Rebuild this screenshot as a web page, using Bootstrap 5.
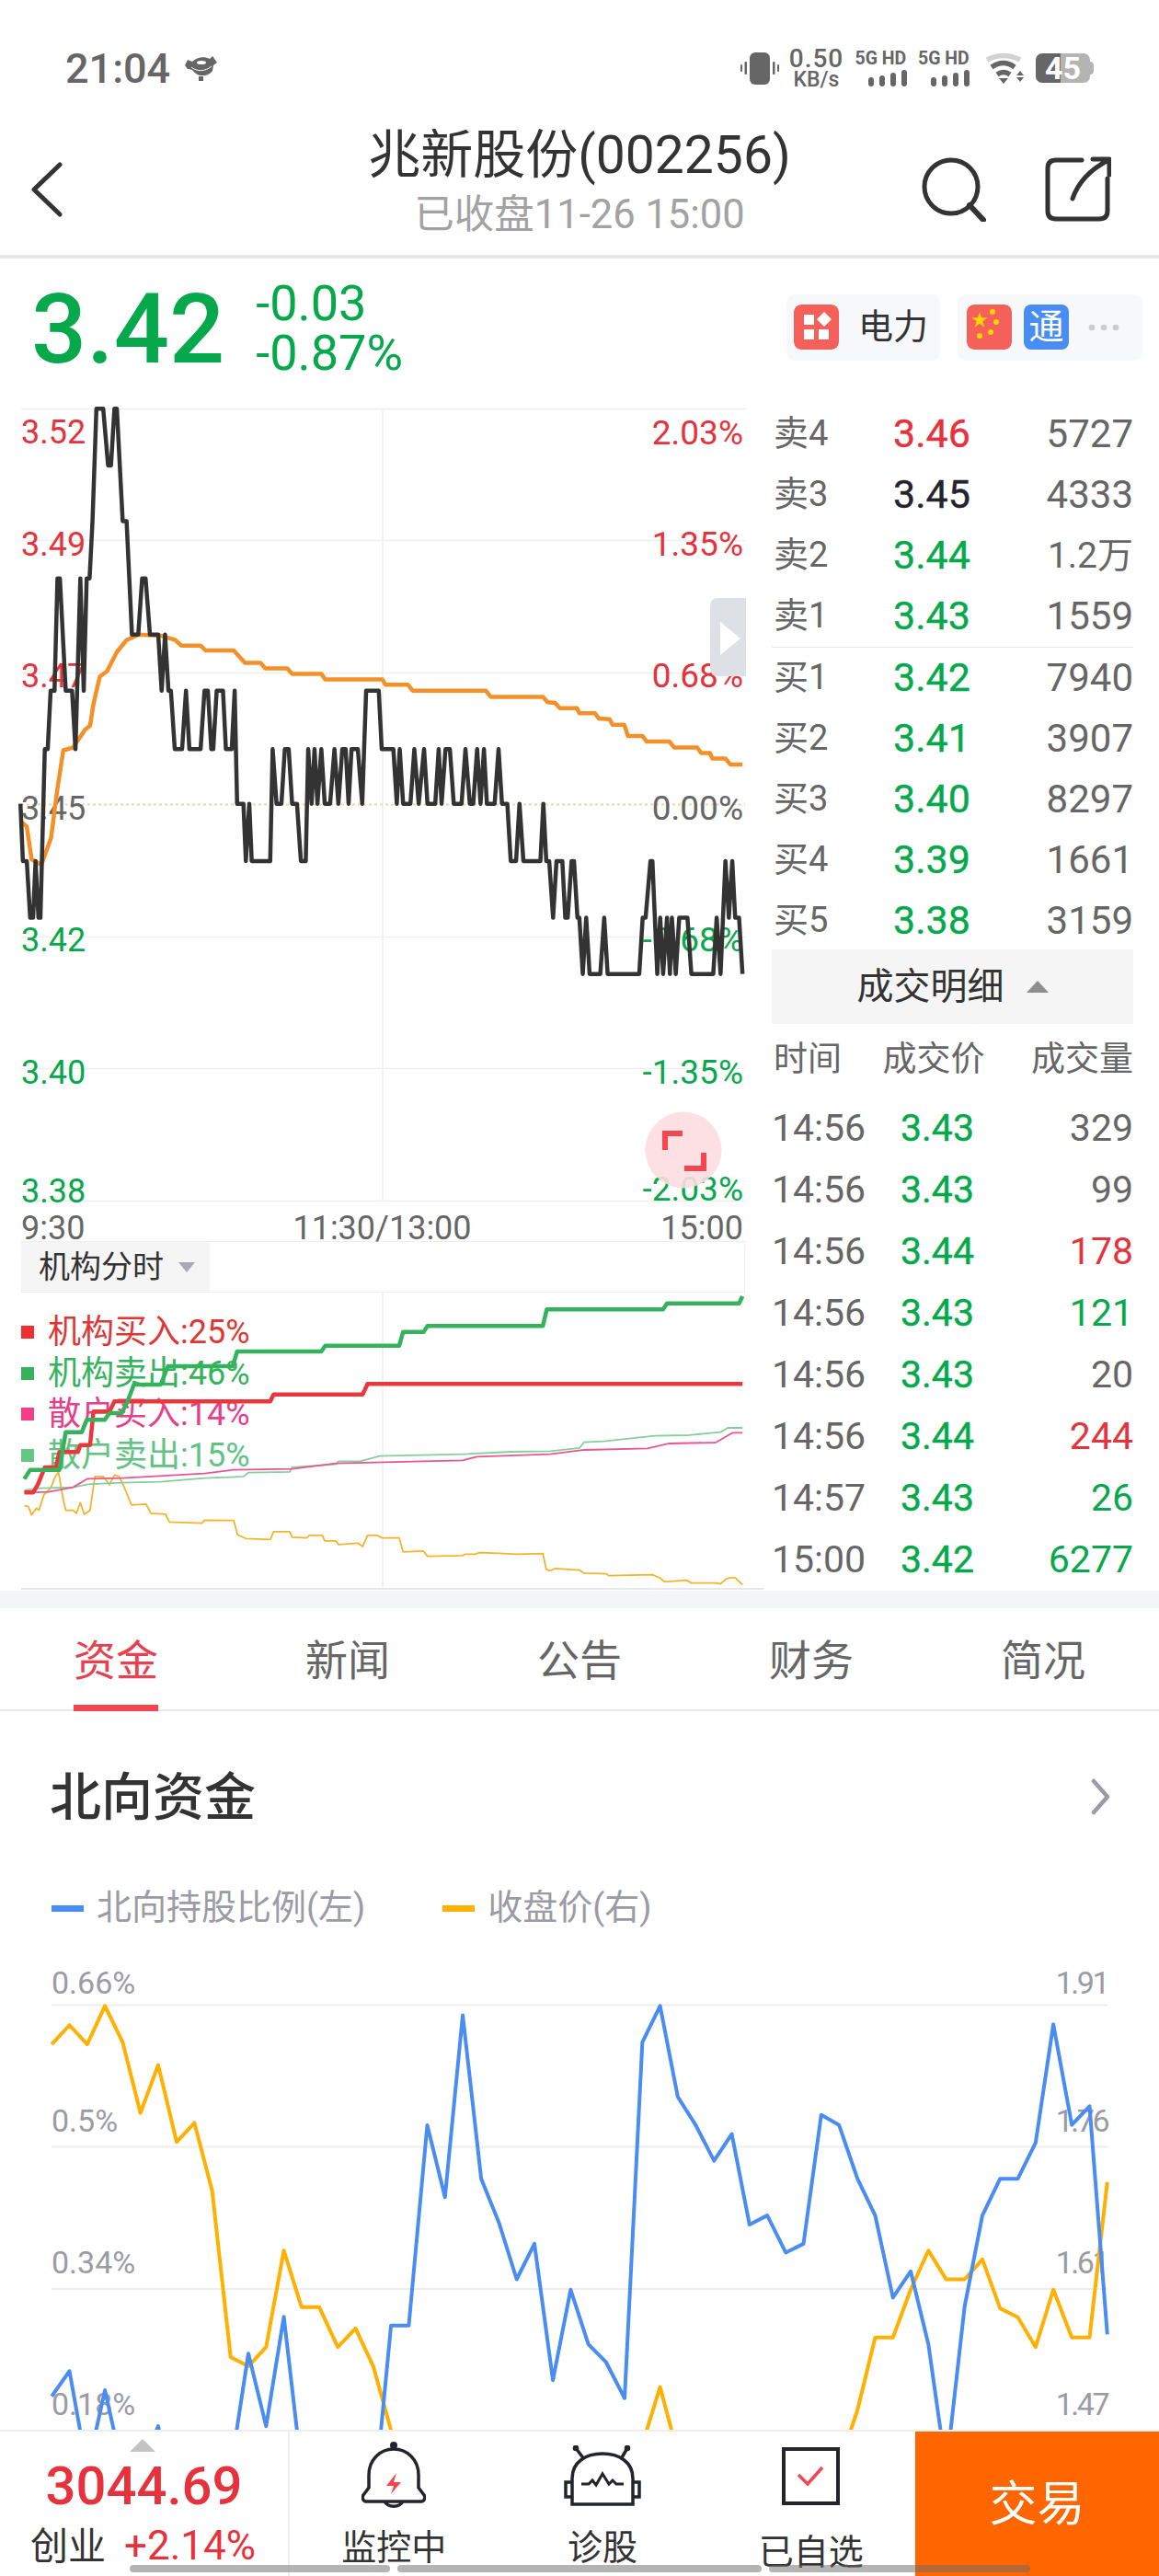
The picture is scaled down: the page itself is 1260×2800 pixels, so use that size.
<!DOCTYPE html>
<html lang="zh">
<head>
<meta charset="utf-8">
<title>兆新股份</title>
<link href="https://cdn.jsdelivr.net/npm/bootstrap@5.3.0/dist/css/bootstrap.min.css" rel="stylesheet">
<style>
html,body{margin:0;height:2800px;overflow:hidden;background:#fff}
body{font-family:Roboto,"Noto Sans CJK SC",sans-serif;color:#333;width:1260px;line-height:1.2}
.c-red{color:#e5323c}.c-green{color:#06a84c}.c-gray{color:#666}.c-dark{color:#23242c}
.st-bar{height:135px;padding:13px 75px 0 71px;color:#666}
.st-time{font-size:45px;font-weight:500;line-height:1}
.st-speed{font-weight:500;line-height:1;width:56px;margin-left:12.500px}
.st-speed b{font-size:28px;font-weight:500;letter-spacing:1px}
.st-speed i{font-style:normal;font-size:23px;margin-top:-3px}
.st-sig{font-size:19.500px;font-weight:700;line-height:1;margin-left:14px;width:56px;white-space:nowrap}
.st-sig2{margin-left:12.500px}
.st-sig svg{margin-top:3px;align-self:flex-end}
.st-batt{width:59px;height:32px;margin-left:13px;border-radius:7px;background:linear-gradient(90deg,#666 0,#666 45%,#b4b4b4 45%);color:#fff;font-weight:700;font-size:34px;line-height:32px;text-align:center}
.st-batt::after{content:"";position:absolute;left:59px;top:9px;width:4px;height:14px;border-radius:0 4px 4px 0;background:#b4b4b4}
.top-nav{height:142px;padding:0 52px}
.tn-side{width:200px}
.tn-back{margin-left:-20px}
.tn-mid{margin-top:-11px}
.tn-title{font-size:57px;line-height:66px;color:#333}
.tn-sub{font-size:43.500px;line-height:62px;color:#a2a2a2;margin-top:1px}
.tn-acts{gap:64px}
.hr-thick{height:4px;background:#e8e8e8}
.qt-row{height:156px;padding:0 18px 0 34px}
.qt-last{font-size:106px;font-weight:500;line-height:1;margin-top:-2px}
.qt-chg{font-size:54px;line-height:54px;margin-left:34px;margin-top:-4px}
.qt-tags{gap:19px}
.tag-box{background:#f7f8fa;border-radius:9px;height:72px;margin-top:-7px}
.tag-box2{gap:13px;padding-right:25px;padding-left:10px}
.tag-sq{width:49px;height:49px;border-radius:8px;color:#fff;font-size:38px;line-height:49px;text-align:center}
.sq-blue{background:#4a8df2}
.tag-txt{font-size:38px;color:#333;margin:0 13px 0 21px}
.mk-left{width:830px}
.mk-right{width:393px;margin-left:9px}
.ob-row{height:66px;padding:0 0 0 2px;font-size:42px;color:#666}
.ob-lbl{width:130px;font-size:38px}
.ob-prc{font-size:43px;width:120px;-webkit-text-stroke:.4px currentColor}
.ob-wan{font-size:39px}
.ob-sell{height:267px;border-bottom:1px solid #e8e8e8;padding-top:2px}
.dt-head{height:81px;margin-top:-2px;background:#f5f5f5;font-size:40px;color:#333}
.dt-head i{display:block;margin-left:24px;width:0;height:0;border-left:12px solid transparent;border-right:12px solid transparent;border-bottom:13px solid #8e8e8e}
.dt-cols{height:78px;padding:0 0 0 2px;font-size:37px;color:#666;margin-bottom:2px}
.dt-cols span:nth-child(2){margin-left:-6px}
.tr-row{height:67px;padding:0;font-size:41px;color:#666}
.tr-time{width:140px}.tr-prc{width:120px;-webkit-text-stroke:.4px currentColor}
.ax-row{height:32px;margin-left:23px;width:785px;font-size:36px;line-height:1;color:#666}
.ax-row span{flex:1 1 0;white-space:nowrap}
.ax-row .ax-mid{flex:0 0 auto}
.ax-row .ax-end{text-align:right}
.ind-tabs{height:56px;margin-left:23px;width:787px;border-top:1px solid #eee;border-bottom:1px solid #eee;border-right:1px solid #eee}
.ind-tab{width:205px;background:#f5f5f5;font-size:34px;color:#333;padding-left:19px}
.ind-tab i{display:block;margin-left:16px;width:0;height:0;border-left:9px solid transparent;border-right:9px solid transparent;border-top:11px solid #a9a9b3}
.band{height:19px;background:#f4f5f6}
.tab-bar{height:112px;border-bottom:2px solid #e8e8e8}
.tab-bar .nav-link{color:#666;font-size:46px;line-height:1;padding:4px 0 0;height:110px;display:flex;align-items:center;justify-content:center;position:relative}
.tab-bar .nav-link.tab-on{color:#e8404e}
.tab-bar .tab-on::after{content:"";position:absolute;left:80px;bottom:-2px;width:92px;height:7px;background:#f4444f}
.sec-head{height:188px;padding:2px 52px 0 54px}
.sec-head svg{margin-top:-4px}
.sec-title{font-size:56px;font-weight:500;color:#333}
.sec-legend{height:73px;padding:0 0 21px 56px;font-size:38px;color:#9b9ba5}
.lg-mark{width:35px;height:7px;margin-right:14px}
.lg-blue{background:#4a8df2}.lg-yellow{background:#ffb000;margin-left:84px}
.cht{display:block;font-family:Roboto,"Noto Sans CJK SC",sans-serif}
.cht polyline,.cht path.ln{fill:none;vector-effect:non-scaling-stroke;stroke-linejoin:round}
.ax{font-size:36px}
.ax-rt{font-size:37px}
.ax-red{fill:#e5323c}.ax-green{fill:#06a84c}.ax-gray{fill:#666}
.ax-n{font-size:34px;fill:#9b9ba5}
.ax-nr{letter-spacing:-2.500px}
.lg-t{font-size:36px}
.bt-bar{height:159px;background:#fff;border-top:2px solid #eee}
.bt-mkt{width:315px;border-right:2px solid #eee;padding-top:8px}
.bt-mkt>i{display:block;width:0;height:0;border-left:14px solid transparent;border-right:14px solid transparent;border-bottom:14px solid #c4c4c4;margin-left:-4px}
.bt-idx{font-size:58px;font-weight:500;color:#e5323c;line-height:1;margin-top:8px}
.bt-sub{font-size:41px;line-height:1;margin-top:14px;gap:20px;margin-left:-2px;align-items:baseline}
.bt-pct{font-size:44px}
.bt-tool{width:226.670px;padding-top:3px;font-size:38px;color:#333}
.bt-ico{height:90px;margin-bottom:8px}
.bt-lbl{line-height:50px}
.bt-lbl2{margin-top:5px}
.bt-trade{width:265px;background:#f60;color:#fff;font-size:52px;padding-top:4px}
.home-ind{position:absolute;left:141px;bottom:4px;gap:8px}
.home-ind span{display:block;height:8px;border-radius:4px;background:rgba(105,105,105,.5)}
.hi-a{width:283px}.hi-b{width:396px}.hi-c{width:284px}
</style>
</head>
<body>

<div class="st-bar d-flex align-items-center justify-content-between">
  <div class="d-flex align-items-center">
    <span class="st-time">21:04</span>
    <svg class="ms-3" width="36" height="27" viewBox="0 0 36 27"><path fill="#666" d="M0 10 3 4l5 2C13 1 21 0 27 3l3-3 5 7-4 3-1 6c-3 4-7 5-9 5h-5c-3-1-6-3-8-6l-4-1-1 0z"/><rect x="15" y="22" width="5" height="5" fill="#666"/><ellipse cx="18" cy="7" rx="5" ry="2" fill="#fff"/><path d="M7 12c6 5 15 5 22-1" fill="none" stroke="#fff" stroke-width="1"/></svg>
  </div>
  <div class="d-flex align-items-center">
    <svg width="42" height="36" viewBox="0 0 42 36"><rect x="10" y="1" width="22" height="35" rx="6" fill="#666"/><rect x="4.500" y="11" width="2.500" height="14" rx="1" fill="#666"/><rect x="0" y="14" width="2" height="8" rx="1" fill="#666"/><rect x="35" y="11" width="2.500" height="14" rx="1" fill="#666"/><rect x="40" y="14" width="2" height="8" rx="1" fill="#666"/></svg>
    <div class="st-speed d-flex flex-column align-items-center"><b>0.50</b><i>KB/s</i></div>
    <div class="st-sig d-flex flex-column"><span>5G HD</span><svg width="42" height="18" viewBox="0 0 42 18"><rect x="0" y="8" width="6" height="10" rx="3" fill="#666"/><rect x="12" y="6" width="6" height="12" rx="3" fill="#666"/><rect x="24" y="3" width="6" height="15" rx="3" fill="#666"/><rect x="36" y="0" width="6" height="18" rx="3" fill="#666"/></svg></div>
    <div class="st-sig st-sig2 d-flex flex-column"><span>5G HD</span><svg width="42" height="18" viewBox="0 0 42 18"><rect x="0" y="8" width="6" height="10" rx="3" fill="#666"/><rect x="12" y="6" width="6" height="12" rx="3" fill="#666"/><rect x="24" y="3" width="6" height="15" rx="3" fill="#666"/><rect x="36" y="0" width="6" height="18" rx="3" fill="#666"/></svg></div>
    <svg class="ms-3" width="43" height="34" viewBox="0 0 43 34"><path d="M3 8Q21-1 39 8" fill="none" stroke="#d2d2d2" stroke-width="5.500"/><path d="M8 16Q21 7 33 16" fill="none" stroke="#666" stroke-width="5.500"/><path d="M14 24Q21 19 28 24" fill="none" stroke="#666" stroke-width="5.500"/><path d="M16 28H26L21 34ZM35 25H43L39 20ZM35 27H43L39 32Z" fill="#666"/></svg>
    <div class="st-batt position-relative">45</div>
  </div>
</div>

<div class="top-nav d-flex align-items-center justify-content-between">
  <div class="tn-side"><svg width="38" height="60" viewBox="0 0 38 60" class="d-block tn-back"><path d="M33 3 5 30 33 57" fill="none" stroke="#333" stroke-width="5" stroke-linecap="round" stroke-linejoin="round"/></svg></div>
  <div class="tn-mid text-center text-nowrap flex-shrink-0">
    <div class="tn-title">兆新股份(002256)</div>
    <div class="tn-sub">已收盘11-26 15:00</div>
  </div>
  <div class="tn-side tn-acts d-flex justify-content-end align-items-center">
    <svg width="70" height="70" viewBox="0 0 70 70" class="flex-shrink-0"><circle cx="32" cy="32" r="29" fill="none" stroke="#333" stroke-width="5"/><path d="M52 52 67 68" stroke="#333" stroke-width="6" stroke-linecap="round"/></svg>
    <svg width="72" height="72" viewBox="0 0 72 72" class="flex-shrink-0"><path d="M40 4H12Q3 4 3 13V59Q3 68 12 68H59Q68 68 68 59V24" fill="none" stroke="#333" stroke-width="5" stroke-linecap="round"/><path d="M30 46C36 28 50 14 69 4M52 3H70V20" fill="none" stroke="#333" stroke-width="5" stroke-linecap="round" stroke-linejoin="round"/></svg>
  </div>
</div>
<div class="hr-thick"></div>

<div class="qt-row d-flex align-items-center">
  <div class="qt-last c-green">3.42</div>
  <div class="qt-chg c-green"><div>-0.03</div><div>-0.87%</div></div>
  <div class="qt-tags ms-auto d-flex">
    <div class="tag-box d-flex align-items-center ps-2">
      <svg class="tag-sq" viewBox="0 0 49 49"><rect width="49" height="49" rx="8" fill="#f6605a"/><path fill="#fff" d="M11 11H22V22H11ZM11 27H22V38H11ZM27 27H38V38H27ZM33 8l8 8-8 8-8-8Z"/></svg>
      <span class="tag-txt">电力</span>
    </div>
    <div class="tag-box tag-box2 d-flex align-items-center">
      <svg class="tag-sq" viewBox="0 0 49 49"><rect width="49" height="49" rx="8" fill="#f6605a"/><g fill="#ffd400"><path d="M14 8l2 6.300h6.700l-5.400 4 2 6.400-5.300-4-5.300 4 2-6.400-5.400-4h6.700z"/><circle cx="28" cy="8" r="3"/><circle cx="32" cy="19" r="3"/><circle cx="26" cy="30" r="3"/><circle cx="14" cy="34" r="3"/></g></svg>
      <span class="tag-sq sq-blue">通</span>
      <svg width="34" height="8" viewBox="0 0 34 8" class="ms-2"><circle cx="4" cy="4" r="3.300" fill="#ccc"/><circle cx="17" cy="4" r="3.300" fill="#ccc"/><circle cx="30" cy="4" r="3.300" fill="#ccc"/></svg>
    </div>
  </div>
</div>

<div class="d-flex">
  <div class="mk-left">
    <svg class="cht" width="830" height="880" viewBox="0 0 830 880">
      <g stroke="#eee" stroke-width="1.500"><path d="M23 7.500H810M23 150.500H810M23 294.500H810M23 581.500H810M23 724.500H810M23 868.500H810"/><path d="M416 7V868"/></g>
      <path d="M23 437.500H810" stroke="#ecd9a8" stroke-width="2" stroke-dasharray="3 3"/>
      <g class="ax">
        <text class="ax-red" x="23" y="45">3.52</text><text class="ax-red" x="23" y="167">3.49</text><text class="ax-red" x="23" y="310">3.47</text>
        <text class="ax-gray" x="23" y="454">3.45</text>
        <text class="ax-green" x="23" y="597">3.42</text><text class="ax-green" x="23" y="741">3.40</text><text class="ax-green" x="23" y="870">3.38</text>
        <g text-anchor="end" class="ax-rt">
          <text class="ax-red" x="808" y="46">2.03%</text><text class="ax-red" x="808" y="167">1.35%</text><text class="ax-red" x="808" y="310">0.68%</text>
          <text class="ax-gray" x="808" y="454">0.00%</text>
          <text class="ax-green" x="808" y="597">-0.68%</text><text class="ax-green" x="808" y="741">-1.35%</text><text class="ax-green" x="808" y="868">-2.03%</text>
        </g>
      </g>
      <path d="M811 213H781Q772 213 772 222V289Q772 298 781 298H811Z" fill="#dde1e5"/>
      <path d="M783 239 805 257 783 275Z" fill="#fff"/>
      <g transform="translate(0,-7) scale(.5293,.5931)">
        <polyline stroke="#f39028" stroke-width="4.500" points="42,780 55,790 65,850 85,860 105,810 118,720 130,650 150,645 175,612 185,605 192,565 205,515 220,505 240,470 260,448 285,438 330,440 360,448 372,458 412,458 422,467 480,467 503,490 535,490 545,500 590,500 600,510 660,510 668,520 785,520 792,530 838,530 848,541 998,541 1008,552 1115,552 1125,562 1140,563 1150,573 1185,573 1190,582 1222,582 1230,592 1252,593 1258,603 1282,603 1290,624 1320,624 1328,634 1375,634 1385,645 1432,645 1440,655 1458,655 1463,665 1490,665 1500,676 1525,676"/>
        <polyline stroke="#333" stroke-width="4.500" points="42,748 47,853 55,853 62,957 68,957 73,853 79,957 83,957 92,648 98,648 104,541 112,541 118,335 123,335 135,541 148,541 155,648 165,335 172,541 178,335 184,335 190,230 198,24 212,24 222,128 228,128 235,24 240,24 252,230 260,230 271,438 284,438 292,335 299,335 308,438 325,438 332,541 339,438 346,541 351,541 359,648 374,648 382,541 389,648 412,648 420,541 427,541 434,648 438,648 445,541 458,541 464,648 476,648 482,541 487,748 500,748 505,853 512,748 517,853 555,853 560,648 568,748 578,748 585,648 593,648 600,748 610,748 618,853 628,853 633,648 640,748 646,648 652,748 660,648 667,748 678,748 687,648 695,748 703,648 710,648 716,748 722,648 735,648 744,748 752,541 778,541 784,648 808,648 815,748 821,648 828,748 843,748 851,648 860,748 871,648 878,748 894,748 901,648 907,748 915,648 924,648 932,748 948,748 956,648 965,748 972,748 980,648 987,748 994,648 1000,748 1016,748 1024,648 1031,748 1042,748 1049,853 1060,853 1067,748 1075,853 1110,853 1116,748 1122,853 1128,853 1136,957 1143,853 1155,853 1161,957 1166,957 1174,853 1179,853 1186,957 1190,957 1197,1060 1204,957 1211,1060 1233,1060 1241,957 1248,1060 1313,1060 1320,957 1326,957 1336,853 1340,853 1350,1060 1356,957 1362,1060 1370,957 1376,1060 1380,957 1388,1060 1395,957 1412,957 1420,1060 1465,1060 1472,957 1480,1060 1490,853 1497,957 1504,853 1510,957 1518,957 1525,1060"/>
      </g>
      <circle cx="743" cy="813" r="41.500" fill="#fcdde0" fill-opacity=".9"/>
      <path d="M723 813V795H742M744 833H765V816" fill="none" stroke="#f4464f" stroke-width="6"/>
    </svg>
    <div class="ax-row d-flex"><span>9:30</span><span class="ax-mid">11:30/13:00</span><span class="ax-end">15:00</span></div>
    <div class="ind-tabs d-flex"><div class="ind-tab d-flex align-items-center">机构分时<i></i></div></div>
    <svg class="cht" width="830" height="323" viewBox="0 0 830 323">
      <path d="M416 0V322" stroke="#eee" stroke-width="1.500"/>
      <path d="M23 322H830" stroke="#e8e8e8" stroke-width="2"/>
      <rect x="23" y="36" width="14" height="14" fill="#ee3030"/><text class="lg-t" x="52" y="55" fill="#e03636">机构买入:25%</text>
      <rect x="23" y="81" width="14" height="14" fill="#34b35c"/><text class="lg-t" x="52" y="100" fill="#34b35c">机构卖出:46%</text>
      <rect x="23" y="125" width="14" height="14" fill="#f63e86"/><text class="lg-t" x="52" y="144" fill="#e6408a">散户买入:14%</text>
      <rect x="23" y="170" width="14" height="14" fill="#66c884"/><text class="lg-t" x="52" y="189" fill="#62c282">散户卖出:15%</text>
      <g transform="translate(0,-65) scale(.5293,.3333)">
        <polyline stroke="#f4b42c" stroke-width="1.800" points="50,890 58,892 65,920 75,898 80,905 90,855 105,830 112,800 120,780 130,870 135,905 150,905 157,915 165,880 173,918 185,905 195,795 212,795 225,822 235,790 245,795 258,840 270,888 300,885 310,915 340,918 348,943 415,947 420,937 480,938 488,985 505,997 555,1000 562,975 595,975 600,993 630,995 635,987 662,987 667,1005 690,1005 695,1017 735,1012 745,1023 755,987 775,987 785,995 820,995 828,1041 870,1038 878,1055 950,1053 955,1048 975,1048 985,1043 1025,1045 1060,1048 1115,1046 1122,1098 1130,1102 1140,1095 1190,1100 1200,1110 1245,1112 1250,1118 1340,1115 1355,1125 1365,1138 1410,1133 1420,1142 1470,1142 1480,1145 1490,1130 1500,1125 1510,1125 1525,1148"/>
        <polyline stroke="#84cf9c" stroke-width="1.800" points="50,840 80,833 150,830 180,820 250,815 330,812 420,800 500,795 510,782 595,780 600,765 690,755 695,745 740,745 780,728 950,722 1050,714 1130,712 1190,702 1200,683 1240,680 1345,662 1415,660 1480,650 1495,636 1525,636"/>
        <polyline stroke="#e8568e" stroke-width="1.800" points="50,847 100,845 150,830 180,802 250,800 420,785 480,773 600,770 690,752 950,742 980,730 1130,722 1200,708 1330,703 1375,687 1470,684 1505,652 1525,652"/>
        <polyline stroke="#e8383c" stroke-width="4.500" points="50,847 68,847 78,820 92,765 115,765 122,715 160,715 165,692 185,692 192,583 225,583 235,550 555,550 562,527 745,527 755,493 1525,493"/>
        <polyline stroke="#34b35c" stroke-width="4.500" points="50,803 62,773 122,773 135,650 168,650 178,610 215,610 225,588 250,588 262,550 275,495 330,495 345,435 478,435 487,387 660,387 668,368 820,368 828,323 870,323 878,304 1115,304 1123,250 1362,250 1370,230 1518,230 1525,207"/>
      </g>
    </svg>
  </div>
  <div class="mk-right">
    <div class="ob-sell">
      <div class="ob-row d-flex align-items-center"><span class="ob-lbl">卖4</span><span class="ob-prc c-red">3.46</span><span class="ms-auto">5727</span></div>
      <div class="ob-row d-flex align-items-center"><span class="ob-lbl">卖3</span><span class="ob-prc c-dark">3.45</span><span class="ms-auto">4333</span></div>
      <div class="ob-row d-flex align-items-center"><span class="ob-lbl">卖2</span><span class="ob-prc c-green">3.44</span><span class="ms-auto ob-wan">1.2万</span></div>
      <div class="ob-row d-flex align-items-center"><span class="ob-lbl">卖1</span><span class="ob-prc c-green">3.43</span><span class="ms-auto">1559</span></div>
    </div>
    <div class="ob-row d-flex align-items-center"><span class="ob-lbl">买1</span><span class="ob-prc c-green">3.42</span><span class="ms-auto">7940</span></div>
    <div class="ob-row d-flex align-items-center"><span class="ob-lbl">买2</span><span class="ob-prc c-green">3.41</span><span class="ms-auto">3907</span></div>
    <div class="ob-row d-flex align-items-center"><span class="ob-lbl">买3</span><span class="ob-prc c-green">3.40</span><span class="ms-auto">8297</span></div>
    <div class="ob-row d-flex align-items-center"><span class="ob-lbl">买4</span><span class="ob-prc c-green">3.39</span><span class="ms-auto">1661</span></div>
    <div class="ob-row d-flex align-items-center"><span class="ob-lbl">买5</span><span class="ob-prc c-green">3.38</span><span class="ms-auto">3159</span></div>
    <div class="dt-head d-flex align-items-center justify-content-center">成交明细<i></i></div>
    <div class="dt-cols d-flex align-items-center justify-content-between"><span>时间</span><span>成交价</span><span>成交量</span></div>
    <div class="tr-row d-flex align-items-center"><span class="tr-time">14:56</span><span class="tr-prc c-green">3.43</span><span class="ms-auto">329</span></div>
    <div class="tr-row d-flex align-items-center"><span class="tr-time">14:56</span><span class="tr-prc c-green">3.43</span><span class="ms-auto">99</span></div>
    <div class="tr-row d-flex align-items-center"><span class="tr-time">14:56</span><span class="tr-prc c-green">3.44</span><span class="ms-auto c-red">178</span></div>
    <div class="tr-row d-flex align-items-center"><span class="tr-time">14:56</span><span class="tr-prc c-green">3.43</span><span class="ms-auto c-green">121</span></div>
    <div class="tr-row d-flex align-items-center"><span class="tr-time">14:56</span><span class="tr-prc c-green">3.43</span><span class="ms-auto">20</span></div>
    <div class="tr-row d-flex align-items-center"><span class="tr-time">14:56</span><span class="tr-prc c-green">3.44</span><span class="ms-auto c-red">244</span></div>
    <div class="tr-row d-flex align-items-center"><span class="tr-time">14:57</span><span class="tr-prc c-green">3.43</span><span class="ms-auto c-green">26</span></div>
    <div class="tr-row d-flex align-items-center"><span class="tr-time">15:00</span><span class="tr-prc c-green">3.42</span><span class="ms-auto c-green">6277</span></div>
  </div>
</div>

<div class="band"></div>
<nav class="nav nav-fill tab-bar">
  <a class="nav-link tab-on" href="#">资金</a>
  <a class="nav-link" href="#">新闻</a>
  <a class="nav-link" href="#">公告</a>
  <a class="nav-link" href="#">财务</a>
  <a class="nav-link" href="#">简况</a>
</nav>

<div class="sec-head d-flex align-items-center justify-content-between">
  <span class="sec-title">北向资金</span>
  <svg width="22" height="40" viewBox="0 0 22 40"><path d="M3 3 18 20 3 37" fill="none" stroke="#9b9ba5" stroke-width="4.500" stroke-linecap="round" stroke-linejoin="round"/></svg>
</div>
<div class="sec-legend d-flex align-items-center">
  <span class="lg-mark lg-blue"></span><span>北向持股比例(左)</span>
  <span class="lg-mark lg-yellow"></span><span>收盘价(右)</span>
</div>
<svg class="cht" width="1260" height="680" viewBox="0 0 1260 680">
  <path d="M56 58.500H1204M56 212.500H1204M56 367H1204M56 521H1204" stroke="#eee" stroke-width="2"/>
  <text class="ax-n" x="56" y="46">0.66%</text><text class="ax-n" x="56" y="196">0.5%</text><text class="ax-n" x="56" y="350">0.34%</text><text class="ax-n" x="56" y="504">0.18%</text>
  <g text-anchor="end" class="ax-nr"><text class="ax-n" x="1204" y="46">1.91</text><text class="ax-n" x="1204" y="196">1.76</text><text class="ax-n" x="1204" y="350">1.61</text><text class="ax-n" x="1204" y="504">1.47</text></g>
  <g transform="scale(.8036,.4337)">
    <polyline stroke="#ffb000" stroke-width="4" points="70,233 94,185 118,233 142,137 166,228 190,405 214,285 239,478 263,430 287,600 312,1017 336,1040 360,992 384,750 408,892 432,892 457,992 481,945 505,1040 529,1200 553,1400 850,1400 875,1200 893,1092 917,1260 1140,1260 1160,1150 1184,968 1208,968 1232,848 1256,750 1280,822 1305,822 1329,772 1353,895 1377,917 1401,992 1425,848 1450,968 1474,968 1498,578"/>
    <polyline stroke="#4a8df2" stroke-width="4" points="70,1115 94,1052 118,1300 142,1100 166,1300 190,1300 214,1190 238,1400 290,1400 312,1300 336,1008 360,1190 384,916 408,1300 432,1400 505,1400 529,938 553,938 578,436 602,616 626,160 651,570 675,680 699,822 723,733 748,1075 772,848 796,985 820,1030 845,1120 869,228 893,137 917,365 941,435 966,525 990,458 1014,685 1038,662 1063,755 1087,733 1111,410 1135,435 1160,570 1184,662 1208,868 1232,802 1256,985 1280,1300 1305,890 1329,662 1353,570 1377,570 1401,480 1425,183 1450,435 1474,388 1498,960"/>
  </g>
</svg>

<div class="bt-bar fixed-bottom d-flex">
  <div class="bt-mkt d-flex flex-column align-items-center flex-shrink-0">
    <i></i>
    <div class="bt-idx">3044.69</div>
    <div class="bt-sub d-flex"><span>创业</span><span class="c-red bt-pct">+2.14%</span></div>
  </div>
  <div class="bt-tool d-flex flex-column align-items-center">
    <div class="bt-ico d-flex align-items-center"><svg width="70" height="74" viewBox="0 0 70 74"><circle cx="35" cy="4" r="4" fill="#23242c"/><path d="M35 8C20 8 8 20 8 36V50L2 58C0 61 2 65 5 65H65C68 65 70 61 68 58L62 50V36C62 20 50 8 35 8ZM25 65A11 9 0 0 0 45 65" fill="none" stroke="#23242c" stroke-width="3.500"/><path d="M38 34 27 48H35L32 57 43 44H35Z" fill="#f4464f"/></svg></div>
    <div class="bt-lbl">监控中</div>
  </div>
  <div class="bt-tool d-flex flex-column align-items-center">
    <div class="bt-ico d-flex align-items-center"><svg width="84" height="66" viewBox="0 0 84 66"><path d="M9 64V36C9 18 24 9 42 9S75 18 75 36V64ZM9 40H2V56H9M75 40H82V56H75M13 3 22 15M69 3 62 15" fill="none" stroke="#23242c" stroke-width="3.500"/><circle cx="13" cy="3" r="3.300" fill="#23242c"/><circle cx="69" cy="3" r="3.300" fill="#23242c"/><path d="M19 42H27L31 38 35 43 42 31 49 42 53 38 57 42H65" fill="none" stroke="#23242c" stroke-width="3"/></svg></div>
    <div class="bt-lbl">诊股</div>
  </div>
  <div class="bt-tool d-flex flex-column align-items-center">
    <div class="bt-ico d-flex align-items-center"><svg width="63" height="63" viewBox="0 0 63 63"><rect x="2" y="2" width="59" height="59" fill="none" stroke="#23242c" stroke-width="4"/><path d="M18 30 28 40 44 22" fill="none" stroke="#f4464f" stroke-width="3.500"/></svg></div>
    <div class="bt-lbl bt-lbl2">已自选</div>
  </div>
  <div class="bt-trade d-flex align-items-center justify-content-center flex-shrink-0">交易</div>
  <div class="home-ind d-flex"><span class="hi-a"></span><span class="hi-b"></span><span class="hi-c"></span></div>
</div>

<script src="https://cdn.jsdelivr.net/npm/bootstrap@5.3.0/dist/js/bootstrap.bundle.min.js"></script>
</body>
</html>
